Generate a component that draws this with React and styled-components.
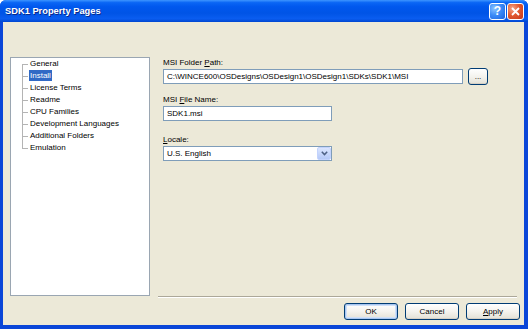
import React from "react";
import styled, { createGlobalStyle } from "styled-components";

const Global = createGlobalStyle`
  html, body { margin: 0; padding: 0; background: #ffffff; }
  * { box-sizing: border-box; }
`;

const FONT = `"Liberation Sans", Arial, sans-serif`;

/* ─── Window frame ────────────────────────────────────────────── */
const Window = styled.div`
  width: 528px; height: 329px;
  display: flex; flex-direction: column;
  background: #0a46d8;
  font-family: ${FONT};
  font-size: 8px; color: #000;
  border-radius: 6px 6px 0 0;
  overflow: hidden;
`;

const TitleBar = styled.div`
  height: 22px; flex-shrink: 0;
  display: flex; align-items: center; justify-content: space-between;
  padding: 0 5px 0 5px;
  background: linear-gradient(to bottom,
    #3d95ff 0%, #0a66f5 12%, #0058ee 30%, #0054e6 60%, #0a5df0 85%, #0046d0 100%);
`;

const Title = styled.span`
  color: #fff; font-weight: 700; font-size: 9.3px;
  font-family: ${FONT};
  text-shadow: 1px 1px 0 #0a2a8a;
`;

const CapButtons = styled.div`
  display: flex; gap: 1px; margin-right: -1px;
`;

const CapBtn = styled.div`
  width: 17px; height: 17px;
  border: 1px solid #fff; border-radius: 3px;
  display: flex; align-items: center; justify-content: center;
  color: #fff; font-weight: 700; font-size: 12px;
  font-family: ${FONT};
  background: ${({ $close }) =>
    $close
      ? "radial-gradient(circle at 30% 30%, #f5a78a 0%, #e25a30 45%, #c4381a 100%)"
      : "radial-gradient(circle at 30% 30%, #8cc4ff 0%, #3c8cf8 45%, #1a62e0 100%)"};
`;

const Client = styled.div`
  flex: 1;
  margin: 0 4px 4px 3px;
  background: #ece9d8;
  display: flex; flex-direction: column;
  padding: 35px 4px 5px 7px;
`;

/* ─── Main area ───────────────────────────────────────────────── */
const Main = styled.div`
  height: 240px;
  display: flex;
`;

const Tree = styled.ul`
  width: 140px; height: 239px;
  margin: 0; padding: 0 0 0 11px;
  list-style: none;
  background: #fff;
  border: 1px solid #9aa6b2;
  flex-shrink: 0;
`;

const TreeItem = styled.li`
  position: relative;
  height: 12px; line-height: 12px;
  padding-left: 7px;
  white-space: nowrap;
  &::before {
    content: ""; position: absolute;
    left: 0; top: 6px; width: 6px;
    border-top: 1px solid #b4b4b4;
  }
  &::after {
    content: ""; position: absolute;
    left: 0;
    top: ${({ $first }) => ($first ? "6px" : "0")};
    bottom: ${({ $last }) => ($last ? "6px" : "0")};
    border-left: 1px solid #b4b4b4;
  }
`;

const ItemLabel = styled.span`
  display: inline-block;
  padding: 0 1px;
  line-height: 11px;
  background: ${({ $selected }) => ($selected ? "#316ac5" : "transparent")};
  color: ${({ $selected }) => ($selected ? "#fff" : "#000")};
`;

const Right = styled.div`
  flex: 1;
  margin-left: 8px;
  margin-right: 3px;
  display: flex; flex-direction: column;
  justify-content: space-between;
`;

const Form = styled.div`
  padding-left: 5px;
  display: flex; flex-direction: column;
`;

const Label = styled.div`
  height: 11px; line-height: 11px;
  margin-top: ${({ $mt }) => $mt || 0}px;
`;

const Row = styled.div`
  display: flex; align-items: center; gap: 5px;
  margin-top: ${({ $mt }) => $mt || 0}px;
`;

const TextBox = styled.div`
  width: ${({ $w }) => $w}px; height: 15px;
  border: 1px solid #7f9db9;
  background: #fff;
  padding: 0 3px;
  line-height: 13px;
  white-space: nowrap; overflow: hidden;
`;

const Select = styled.div`
  width: 169px; height: 15px;
  border: 1px solid #7f9db9;
  background: #fff;
  display: flex; align-items: center; justify-content: space-between;
  padding-left: 3px;
`;

const DropBtn = styled.div`
  width: 14px; height: 13px;
  border: 1px solid #c3d3fd; border-radius: 2px;
  background: linear-gradient(to bottom, #dbe6ff, #b5c9f8);
  display: flex; align-items: center; justify-content: center;
`;

const Separator = styled.div`
  height: 2px;
  border-top: 1px solid #aca899;
  border-bottom: 1px solid #fff;
  margin-bottom: -1px;
`;

/* ─── Buttons ─────────────────────────────────────────────────── */
const ButtonRow = styled.div`
  display: flex; justify-content: flex-end; gap: 7px;
  margin-top: 6px;
`;

const Button = styled.button`
  width: ${({ $w }) => $w || 54}px; height: ${({ $h }) => $h || 17}px;
  padding: 0;
  font-family: ${FONT}; font-size: 8px; color: #000;
  border: 1px solid #003c74; border-radius: 3px;
  background: linear-gradient(to bottom, #ffffff 0%, #f4f3ee 50%, #e3e1d6 100%);
  box-shadow: ${({ $default }) =>
    $default ? "inset 0 0 0 1px #a8c6f0, inset 0 0 0 2px #cfe0f8" : "inset 0 -1px 0 #d6d0c5"};
  line-height: 1;
`;

const U = styled.span`text-decoration: underline;`;

const items = [
  "General",
  "Install",
  "License Terms",
  "Readme",
  "CPU Families",
  "Development Languages",
  "Additional Folders",
  "Emulation",
];

export default function App() {
  return (
    <>
      <Global />
      <Window>
        <TitleBar>
          <Title>SDK1 Property Pages</Title>
          <CapButtons>
            <CapBtn>?</CapBtn>
            <CapBtn $close>
              <svg width="9" height="9" viewBox="0 0 9 9">
                <path d="M1 1 L8 8 M8 1 L1 8" stroke="#fff" strokeWidth="1.8" />
              </svg>
            </CapBtn>
          </CapButtons>
        </TitleBar>

        <Client>
          <Main>
            <Tree>
              {items.map((t, i) => (
                <TreeItem key={t} $first={i === 0} $last={i === items.length - 1}>
                  <ItemLabel $selected={t === "Install"}>{t}</ItemLabel>
                </TreeItem>
              ))}
            </Tree>

            <Right>
              <Form>
                <Label>MSI Folder <U>P</U>ath:</Label>
                <Row>
                  <TextBox $w={300}>C:\WINCE600\OSDesigns\OSDesign1\OSDesign1\SDKs\SDK1\MSI</TextBox>
                  <Button $w={20} $h={17}>...</Button>
                </Row>
                <Label $mt={9}>MSI <U>F</U>ile Name:</Label>
                <Row $mt={1}>
                  <TextBox $w={169}>SDK1.msi</TextBox>
                </Row>
                <Label $mt={13}><U>L</U>ocale:</Label>
                <Row $mt={1}>
                  <Select>
                    <span>U.S. English</span>
                    <DropBtn>
                      <svg width="7" height="5" viewBox="0 0 7 5">
                        <path d="M0.8 0.8 L3.5 3.6 L6.2 0.8" stroke="#4d6185" strokeWidth="1.5" fill="none" />
                      </svg>
                    </DropBtn>
                  </Select>
                </Row>
              </Form>
              <Separator />
            </Right>
          </Main>

          <ButtonRow>
            <Button $default>OK</Button>
            <Button>Cancel</Button>
            <Button><U>A</U>pply</Button>
          </ButtonRow>
        </Client>
      </Window>
    </>
  );
}
